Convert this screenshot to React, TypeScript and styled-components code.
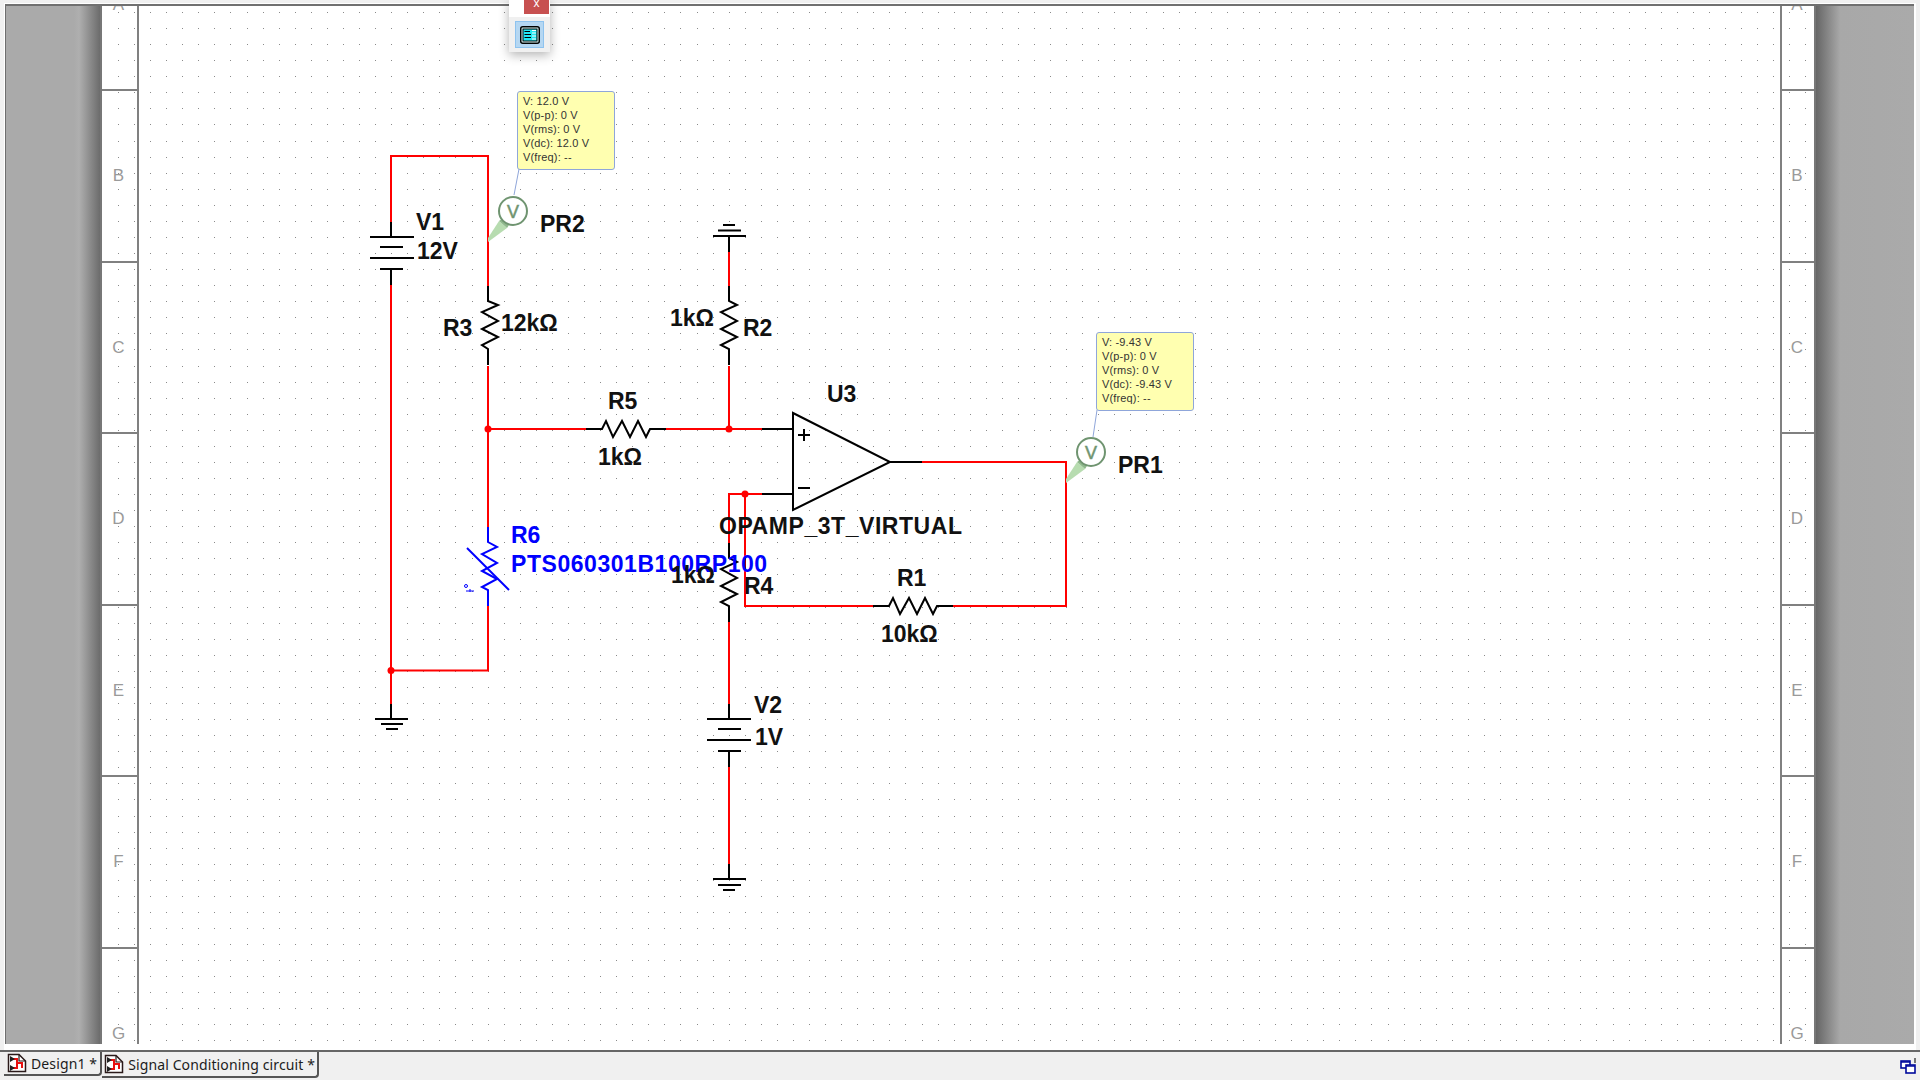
import styled, { createGlobalStyle } from 'styled-components'

const GlobalStyle = createGlobalStyle`
    html, body {
        margin: 0;
        padding: 0;
        background: #f0f0f0;
    }
`

const Page = styled.div`
    width: 1920px;
    height: 1080px;
    display: flex;
    flex-direction: column;
    overflow: hidden;
    position: relative;
    background: #f0f0f0;
    font-family: "Liberation Sans", Arial, sans-serif;
`

const Frame = styled.div`
    height: 1047px;
    padding: 3px 4px 0;
    border-bottom: 2px solid #666;
    display: flex;
`

const Desk = styled.div`
    flex: 1;
    display: flex;
    min-width: 0;
    padding: 1px 2px 6px 1px;
    background: #fff;
`

const Workspace = styled.div`
    flex: 1;
    display: flex;
    min-width: 0;
    border-top: 2px solid #707070;
    border-left: 1px solid #6e6e6e;
`

const LeftGutter = styled.div`
    width: 94px;
    border-right: 2px solid #777;
    background: linear-gradient(to right, #aaa 0, #aaa 68px, #afafaf 73px, #6c6c6c 100%);
`

const RightGutter = styled.div`
    flex: 1;
    border-left: 2px solid #777;
    background: linear-gradient(to right, #666 0, #a8a8a8 24px, #aaa 100%);
`

const Sheet = styled.div`
    width: 1712px;
    position: relative;
    display: flex;
    overflow: hidden;
    background: #fff;
`

const MarginColumn = styled.div<{ $side: 'left' | 'right' }>`
    width: ${p => (p.$side === 'left' ? 35 : 32)}px;
    ${p => (p.$side === 'left' ? 'border-right' : 'border-left')}: 2px solid #808080;
    position: relative;
    z-index: 1;
`

const MarginRows = styled.div`
    margin-top: -88.5px;
    display: grid;
    grid-auto-rows: 171.5px;
`

const MarginRow = styled.div`
    display: flex;
    align-items: center;
    justify-content: center;
    padding: 3px 2px 0 0;
    box-shadow: 0 2px 0 #808080;
    color: #9a9a9a;
    font-size: 17px;
`

const DrawingArea = styled.div`
    flex: 1;
`

const Overlay = styled.div`
    position: absolute;
    left: -102px;
    top: -6px;
    width: 1920px;
    height: 1080px;
`

const Drawing = styled.svg`
    position: absolute;
    left: 0;
    top: 0;
`

const PartLabel = styled.span<{ $x: number; $y: number; $blue?: boolean; $spaced?: boolean }>`
    position: absolute;
    left: ${p => p.$x}px;
    top: ${p => p.$y - 21}px;
    font-size: 23px;
    line-height: 26px;
    font-weight: 700;
    white-space: nowrap;
    letter-spacing: ${p => (p.$spaced ? 0.55 : 0)}px;
    color: ${p => (p.$blue ? '#0000ff' : '#111')};
`

const ProbeNote = styled.div<{ $x: number; $y: number }>`
    position: absolute;
    left: ${p => p.$x}px;
    top: ${p => p.$y}px;
    width: 98px;
    height: 79px;
    box-sizing: border-box;
    padding: 2px 0 0 5px;
    background: #ffffb0;
    border: 1px solid #8fa6da;
    border-radius: 3px;
    color: #333;
    font-size: 11px;
    line-height: 14px;
    letter-spacing: 0.15px;
    white-space: nowrap;
`

const FloatBar = styled.div`
    position: absolute;
    left: 509px;
    top: 0;
    width: 41px;
    height: 52px;
    background: #f0f0f0;
    box-shadow: 0 3px 10px rgba(0, 0, 0, 0.3);
    z-index: 3;
`

const FloatTop = styled.div`
    height: 17px;
    background: #fff;
    display: flex;
    justify-content: flex-end;
`

const CloseButton = styled.div`
    width: 25px;
    height: 14px;
    margin-right: 1px;
    background: #c75050;
    color: #fff;
    font-size: 12px;
    line-height: 6px;
    text-align: center;
    overflow: hidden;
`

const FloatTool = styled.div`
    width: 29px;
    height: 27px;
    margin: 4px 0 0 6px;
    box-sizing: border-box;
    display: flex;
    align-items: center;
    justify-content: center;
    background: #b5d7f2;
    border: 1px solid #8ec3ef;
`

const BottomBar = styled.div`
    flex: 1;
    display: flex;
    justify-content: space-between;
    padding-left: 4px;
`

const Tabs = styled.div`
    display: flex;
    align-items: flex-start;
`

const Tab = styled.div<{ $active?: boolean }>`
    height: ${p => (p.$active ? 24 : 26)}px;
    box-sizing: border-box;
    display: flex;
    align-items: center;
    gap: 4px;
    padding: 0 ${p => (p.$active ? 3 : 2)}px 0 ${p => (p.$active ? 3 : 2)}px;
    border-right: 2px solid #555;
    border-bottom: 2px solid #555;
    border-bottom-right-radius: 4px;
    font-family: "Noto Sans", "Open Sans", sans-serif;
    font-size: 14px;
    letter-spacing: 0.12px;
    color: #1c1c1c;
    white-space: nowrap;
`

const Tray = styled.div`
    padding: 6px 3px 0 0;
`

const WIRE = '#ff0000'
const BLACK = '#000000'
const BLUE = '#0000ff'

const PITCH = 16.07

// the sheet's dot grid, rounded per dot because the pitch is not a whole pixel
let gridPath = ''
for (let i = 0; i <= 105; i++) {
    for (let j = 0; j <= 64; j++) {
        gridPath += `M${Math.round(118 + i * PITCH)} ${Math.round(12 + j * PITCH)}h1v1h-1z`
    }
}

const wires = [
    'M391 222V156H488V286',
    'M391 285V704',
    'M391 670.5H488V606',
    'M488 366V527',
    'M488 429H590',
    'M666 429H762',
    'M729 252V286',
    'M729 366V429',
    'M729 543V494H762',
    'M745 494V606H873',
    'M953 606H1066V462H922',
    'M729 622V704',
    'M729 767V864',
]

const blacks = [
    'M391 222V237', 'M370 237H414', 'M380 247H403', 'M370 258H414', 'M380 269H403', 'M391 269V285',
    'M391 704V719', 'M375 719H408', 'M381 724H403', 'M386 729H398',
    'M713 236H746', 'M718 230.5H741', 'M723 225H735', 'M729 236V252',
    'M729 704V719', 'M707 719H751', 'M718 729H741', 'M707 740H751', 'M718 751H741', 'M729 751V767',
    'M729 864V879', 'M713 879H746', 'M718 885H741', 'M723 890H735',
    'M762 429H793', 'M762 494H793', 'M890 462H922',
    'M793 413V510L890 462Z', 'M798 435H810', 'M804 429V441', 'M798 488H810',
]

const verticalResistor = (x: number, y: number, shift = 0) => {
    const c = x + shift
    return `M${x} ${y}V${y + 15}L${c + 8} ${y + 19}L${c - 8} ${y + 26}L${c + 8} ${y + 35}L${c - 8} ${y + 43}L${c + 8} ${y + 51}L${c - 8} ${y + 59}L${x} ${y + 63}V${y + 79}`
}

const horizontalResistor = (x: number, y: number) =>
    `M${x} ${y}H${x + 16}L${x + 20} ${y - 8}L${x + 27} ${y + 8}L${x + 36} ${y - 8}L${x + 44} ${y + 8}L${x + 52} ${y - 8}L${x + 60} ${y + 8}L${x + 64} ${y}H${x + 80}`

const resistors = [
    verticalResistor(488, 286, 2),
    verticalResistor(729, 286),
    verticalResistor(729, 543),
    horizontalResistor(586, 429),
    horizontalResistor(873, 606),
]

const Probe = ({ x, y }: { x: number; y: number }) => (
    <g transform={`translate(${x} ${y})`}>
        <polygon points="-25,31 -25,27 -14,10 -6,17" fill="#b7dcb0" />
        <polygon points="-14,10 -10,7 -4,14 -6,17" fill="#8fb98c" />
        <circle cx="0" cy="0" r="14" fill="#fff" stroke="#6f9470" strokeWidth="2" />
        <text x="0" y="6.5" textAnchor="middle" fontFamily="Liberation Sans" fontSize="18" fill="#6f9470" stroke="#6f9470" strokeWidth="0.5">V</text>
    </g>
)

const SheetIcon = () => (
    <svg width="20" height="20" viewBox="0 0 20 20">
        <path d="M1.5 1.5H12L18.5 8V18.5H1.5Z" fill="#fff" stroke="#2a1a1a" strokeWidth="1.5" />
        <path d="M12 1.5V8H18.5" fill="none" stroke="#2a1a1a" strokeWidth="1.2" />
        <path d="M5 6H10V15H5M10 10H15V15" fill="none" stroke="#e81010" strokeWidth="2" />
        <path d="M3 3L8 6L3 9ZM3 12L8 15L3 18Z" fill="#222" />
    </svg>
)

const TrayIcon = () => (
    <svg width="17" height="17" viewBox="0 0 17 17">
        <path d="M15 0V5" stroke="#222" strokeWidth="1.2" />
        <rect x="1" y="3" width="9" height="7" fill="#fff" stroke="#000a9c" strokeWidth="1.6" />
        <rect x="6" y="7" width="9" height="8" fill="#fff" stroke="#000a9c" strokeWidth="1.6" />
        <path d="M1 4H10M6 8H15" stroke="#000a9c" strokeWidth="1.6" />
    </svg>
)

const ToolIcon = () => (
    <svg width="20" height="18" viewBox="0 0 20 18">
        <rect x="0.75" y="0.75" width="18.5" height="16.5" rx="2" fill="#dff" stroke="#000" strokeWidth="1.5" />
        <rect x="3" y="3" width="14" height="12" fill="#20e8f4" stroke="#000" strokeWidth="1" />
        <path d="M4.5 5.5H10M4.5 8.5H11M4.5 11.5H11" stroke="#000" strokeWidth="1.2" />
        <path d="M12 4.5H16M12 7H16M12 10H16M12 13H16" stroke="#fff" strokeWidth="1" />
    </svg>
)

const rowLetters = ['A', 'B', 'C', 'D', 'E', 'F', 'G']

const App = () => {
    return (
        <Page>
            <GlobalStyle />
            <Frame>
                <Desk>
                    <Workspace>
                        <LeftGutter />
                        <Sheet>
                            <Overlay>
                                <Drawing width="1920" height="1080" viewBox="0 0 1920 1080">
                                    <path d={gridPath} fill="#8a8a8a" shapeRendering="crispEdges" />
                                </Drawing>
                            </Overlay>
                            <MarginColumn $side="left">
                                <MarginRows>
                                    {rowLetters.map(l => <MarginRow key={l}>{l}</MarginRow>)}
                                </MarginRows>
                            </MarginColumn>
                            <DrawingArea />
                            <MarginColumn $side="right">
                                <MarginRows>
                                    {rowLetters.map(l => <MarginRow key={l}>{l}</MarginRow>)}
                                </MarginRows>
                            </MarginColumn>
                            <Overlay>
                                <Drawing width="1920" height="1080" viewBox="0 0 1920 1080" fill="none" strokeWidth="2">
                                    {wires.map(d => <path key={d} d={d} stroke={WIRE} />)}
                                    {blacks.map(d => <path key={d} d={d} stroke={BLACK} />)}
                                    {resistors.map(d => <path key={d} d={d} stroke={BLACK} />)}
                                    <circle cx="488" cy="429" r="3.5" fill={WIRE} />
                                    <circle cx="729" cy="429" r="3.5" fill={WIRE} />
                                    <circle cx="745" cy="494" r="3.5" fill={WIRE} />
                                    <circle cx="391" cy="670.5" r="3.5" fill={WIRE} />

                                    <path d="M488 527V542L497 547L482 554L497 563L482 571L497 579L482 587L488 590V606" stroke={BLUE} />
                                    <path d="M467 548L509 590" stroke={BLUE} />
                                    <circle cx="466" cy="586" r="1.5" stroke={BLUE} strokeWidth="1" />
                                    <path d="M466 591H474M470 589V592" stroke={BLUE} strokeWidth="1" />

                                    <path d="M519 169L514 195" stroke="#8fa6da" strokeWidth="1" />
                                    <path d="M1097 410L1093 437" stroke="#8fa6da" strokeWidth="1" />
                                    <Probe x={513} y={211} />
                                    <Probe x={1091} y={452} />
                                </Drawing>

                                <PartLabel $x={416} $y={230}>V1</PartLabel>
                                <PartLabel $x={417} $y={259}>12V</PartLabel>
                                <PartLabel $x={540} $y={232}>PR2</PartLabel>
                                <PartLabel $x={443} $y={336}>R3</PartLabel>
                                <PartLabel $x={501} $y={331}>12kΩ</PartLabel>
                                <PartLabel $x={670} $y={326}>1kΩ</PartLabel>
                                <PartLabel $x={743} $y={336}>R2</PartLabel>
                                <PartLabel $x={608} $y={409}>R5</PartLabel>
                                <PartLabel $x={598} $y={465}>1kΩ</PartLabel>
                                <PartLabel $x={827} $y={402}>U3</PartLabel>
                                <PartLabel $x={1118} $y={473}>PR1</PartLabel>
                                <PartLabel $x={719} $y={534} $spaced>OPAMP_3T_VIRTUAL</PartLabel>
                                <PartLabel $x={511} $y={543} $blue>R6</PartLabel>
                                <PartLabel $x={511} $y={572} $blue $spaced>PTS060301B100RP100</PartLabel>
                                <PartLabel $x={671} $y={583}>1kΩ</PartLabel>
                                <PartLabel $x={744} $y={594}>R4</PartLabel>
                                <PartLabel $x={897} $y={586}>R1</PartLabel>
                                <PartLabel $x={881} $y={642}>10kΩ</PartLabel>
                                <PartLabel $x={754} $y={713}>V2</PartLabel>
                                <PartLabel $x={755} $y={745}>1V</PartLabel>

                                <ProbeNote $x={517} $y={91}>
                                    V: 12.0 V<br />V(p-p): 0 V<br />V(rms): 0 V<br />V(dc): 12.0 V<br />V(freq): --
                                </ProbeNote>
                                <ProbeNote $x={1096} $y={332}>
                                    V: -9.43 V<br />V(p-p): 0 V<br />V(rms): 0 V<br />V(dc): -9.43 V<br />V(freq): --
                                </ProbeNote>
                            </Overlay>
                        </Sheet>
                        <RightGutter />
                    </Workspace>
                </Desk>
            </Frame>
            <BottomBar>
                <Tabs>
                    <Tab $active><SheetIcon />Design1 *</Tab>
                    <Tab><SheetIcon />Signal Conditioning circuit *</Tab>
                </Tabs>
                <Tray><TrayIcon /></Tray>
            </BottomBar>
            <FloatBar>
                <FloatTop><CloseButton>x</CloseButton></FloatTop>
                <FloatTool><ToolIcon /></FloatTool>
            </FloatBar>
        </Page>
    )
}

export default App
